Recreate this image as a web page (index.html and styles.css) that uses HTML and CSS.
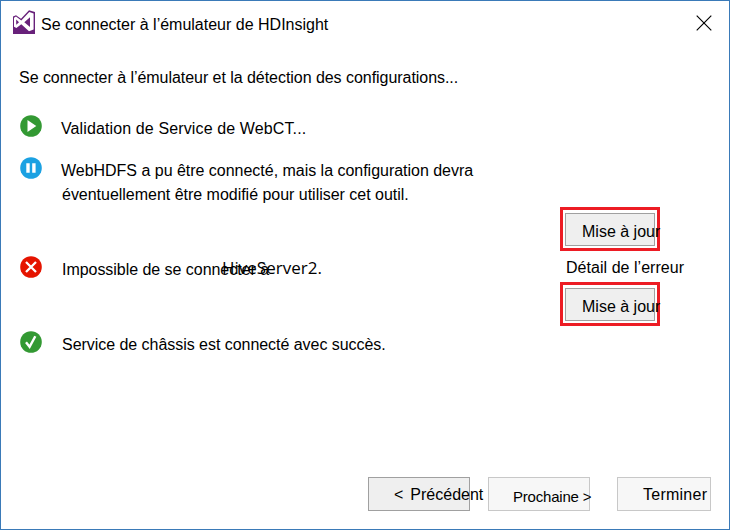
FILE: index.html
```html
<!DOCTYPE html>
<html lang="fr">
<head>
<meta charset="utf-8">
<title>Se connecter à l’émulateur de HDInsight</title>
<link rel="stylesheet" href="styles.css">
</head>
<body>
<main class="dialog">
  <header class="titlebar">
    <svg class="logo" viewBox="0 0 22 24"><path fill="#68217a" d="M0 6.5 3 5.2 8 8.8 16 .2 22 2V24H0Z"/><path fill="#fff" fill-rule="evenodd" d="M1 7.8 3 6.6 8.3 10.4 16.3 1.9 20.6 3.4V19.6L16 21.2 8.3 14.3 3.4 18 1 16.8ZM3.2 9.6V14.8L6 12.2ZM17 7.2 11.3 12.2 17 17Z"/></svg>
    <h1 class="title">Se connecter à l’émulateur de HDInsight</h1>
    <svg class="close" viewBox="0 0 16 16"><path d="M.7.7 15.3 15.3M15.3.7.7 15.3" stroke="#000" stroke-width="1.15"/></svg>
  </header>
  <p class="intro">Se connecter à l’émulateur et la détection des configurations...</p>
  <section class="content">
    <ul class="steps">
      <li class="step step-run">
        <svg class="icon" viewBox="0 0 22 22"><circle cx="11" cy="11" r="10.8" fill="#339933"/><path d="M7.5 5 16.3 11 7.5 17Z" fill="#fff"/></svg>
        <span class="label label-run">Validation de Service de WebCT...</span>
      </li>
      <li class="step step-pause">
        <svg class="icon" viewBox="0 0 22 22"><circle cx="11" cy="11" r="10.8" fill="#1ba1e2"/><path d="M6.3 6.2H9.7V15.8H6.3ZM12.2 6.2H15.6V15.8H12.2Z" fill="#fff"/></svg>
        <span class="label"><span class="line-a">WebHDFS a pu être connecté, mais la configuration devra</span><br><span class="line-b">éventuellement être modifié pour utiliser cet outil.</span></span>
      </li>
      <li class="step step-error">
        <svg class="icon" viewBox="0 0 22 22"><circle cx="11" cy="11" r="10.8" fill="#e51400"/><path d="M6 6 16 16M16 6 6 16" stroke="#fff" stroke-width="2.3"/></svg>
        <span class="label label-inset">Impossible de se connecter à</span>
        <span class="server">HiveServer2.</span>
      </li>
      <li class="step">
        <svg class="icon" viewBox="0 0 22 22"><circle cx="11" cy="11" r="10.8" fill="#339933"/><path d="M6 11.2 9.6 15.8 15.3 5.3" fill="none" stroke="#fff" stroke-width="2.4"/></svg>
        <span class="label label-inset label-ok">Service de châssis est connecté avec succès.</span>
      </li>
    </ul>
    <div class="actions">
      <div class="highlight"><button class="update">Mise à jour</button></div>
      <span class="detail">Détail de l’erreur</span>
      <div class="highlight"><button class="update">Mise à jour</button></div>
    </div>
  </section>
  <footer class="footer">
    <button class="nav nav-prev"><span class="arrow">&lt;</span><span>Précédent</span></button>
    <button class="nav nav-next">Prochaine &gt;</button>
    <button class="nav nav-end">Terminer</button>
  </footer>
</main>
</body>
</html>
```
FILE: styles.css
```css
* { box-sizing: border-box; }
body { margin: 0; }
.dialog {
  display: flex;
  flex-direction: column;
  width: 730px;
  height: 530px;
  border: 1px solid #3a7ab8;
  background: #fff;
  color: #000;
  font: 16px/24px "Liberation Sans", Arial, sans-serif;
}
svg { display: block; flex: none; }
.titlebar {
  display: flex;
  align-items: flex-start;
  height: 65px;
  padding: 9px 17px 0 12px;
}
.logo { width: 22px; height: 24px; }
.title { margin: 3px 0 0 6px; font-size: 16px; font-weight: 400; white-space: nowrap; }
.close { width: 16px; height: 16px; margin: 5px 0 0 auto; }
.intro { margin: 0 0 25px 18px; letter-spacing: -0.045px; white-space: nowrap; }
.content { display: flex; }
.steps { width: 540px; margin: 0; padding: 0 0 0 19px; list-style: none; }
.step { display: flex; align-items: flex-start; }
.step-run { height: 42px; }
.step-pause { height: 99px; }
.step-error { height: 75px; }
.icon { width: 22px; height: 22px; }
.label { margin: 2px 0 0 19px; white-space: nowrap; }
.label-run { letter-spacing: 0.12px; }
.line-a { letter-spacing: -0.02px; }
.line-b { margin-left: 1px; letter-spacing: -0.02px; }
.label-inset { margin-left: 20px; letter-spacing: -0.04px; }
.server {
  margin: 0 0 0 -47px;
  font-family: "Open Sans", "Noto Sans", sans-serif;
  font-size: 17px;
  white-space: nowrap;
}
.actions { display: flex; flex-direction: column; padding: 92px 0 0 19px; }
.highlight { width: 100px; height: 44px; padding: 3px 2px; border: 3px solid #ed1c24; }
button { display: block; font: inherit; color: inherit; text-align: left; white-space: nowrap; overflow: visible; }
.update {
  width: 90px;
  height: 33px;
  padding: 5px 0 0 16px;
  border: 1px solid #a0a0a0;
  background: #efefef;
}
.detail { margin: 5px 0 2px 6px; letter-spacing: 0.04px; white-space: nowrap; }
.footer {
  display: flex;
  margin-top: auto;
  padding: 0 18px 18px 367px;
}
.nav {
  display: flex;
  align-items: center;
  width: 102px;
  height: 34px;
  padding: 2px 0 0 25px;
  border: 1px solid #c8c8c8;
  background: #f7f7f7;
}
.nav-prev { border-color: #a0a0a0; background: #efefef; }
.arrow { margin-right: 7px; }
.nav-next { margin-left: 18px; padding: 5px 0 0 24px; font-size: 15px; letter-spacing: -0.2px; }
.nav-end { width: 94px; margin-left: 27px; letter-spacing: 0.25px; }
```
